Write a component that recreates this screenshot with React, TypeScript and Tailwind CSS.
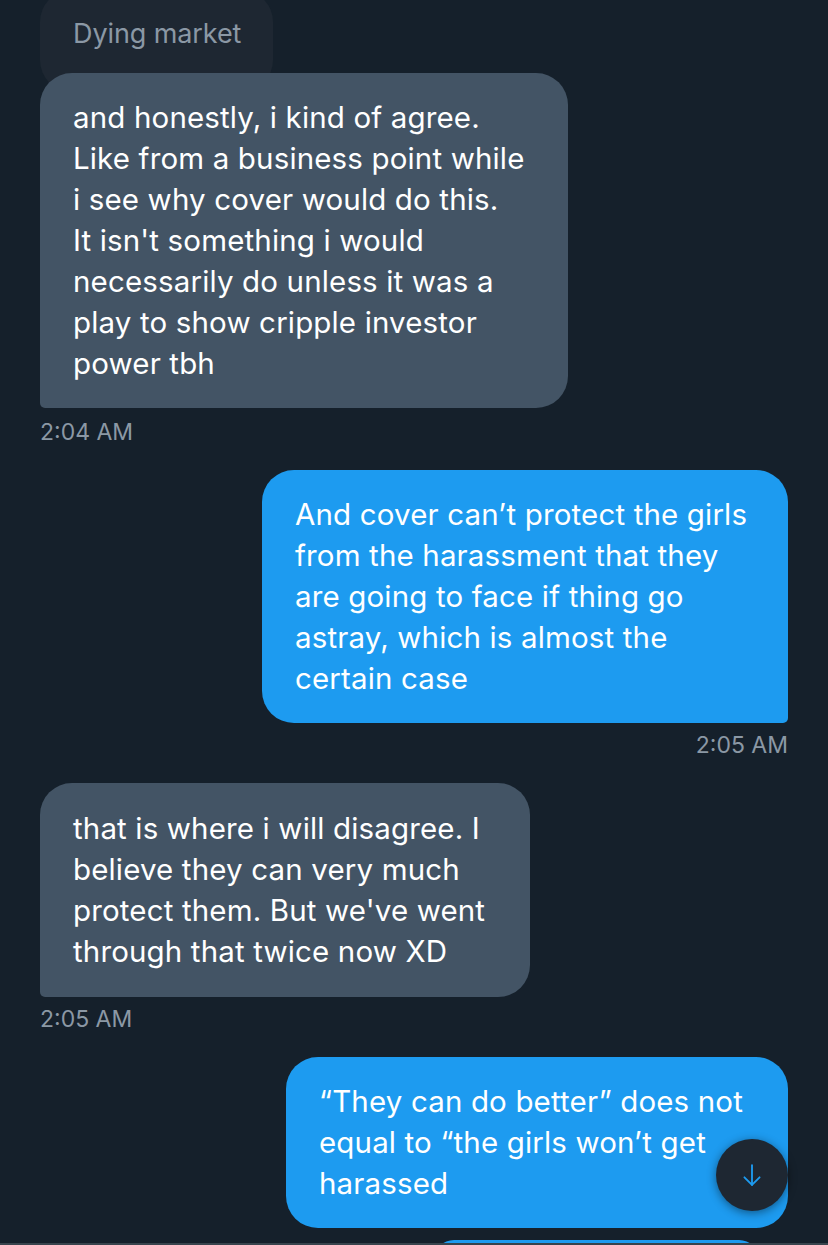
import React from "react";

const font = { fontFamily: "Inter, 'Noto Sans', sans-serif" };

function Lines({ lines }: { lines: string[] }) {
  return (
    <>
      {lines.map((l, i) => (
        <div key={i} className="whitespace-nowrap">
          {l}
        </div>
      ))}
    </>
  );
}

export default function App() {
  return (
    <div
      className="relative h-[1245px] w-[828px] overflow-hidden bg-[#15202b] text-white"
      style={font}
    >
      <div className="flex flex-col px-[40px]">
        {/* quoted reply */}
        <div className="mt-[-10px] h-[102px] w-[233px] rounded-[32px] bg-[#1e2732] pl-[33px] pt-[24px] text-[27px] leading-[40px] tracking-[-0.1px] text-[#8b98a5]">
          Dying market
        </div>

        {/* bubble 1 */}
        <div className="relative z-10 mt-[-19px] w-[528px] rounded-[32px] rounded-bl-[5px] bg-[#435465] px-[33px] py-[24px] text-[29.5px] leading-[41px] tracking-[0.15px]">
          <Lines
            lines={[
              "and honestly, i kind of agree.",
              "Like from a business point while",
              "i see why cover would do this.",
              "It isn't something i would",
              "necessarily do unless it was a",
              "play to show cripple investor",
              "power tbh",
            ]}
          />
        </div>
        <div className="mt-[12px] text-[23px] leading-[24px] text-[#8b98a5]">2:04 AM</div>

        {/* bubble 2 */}
        <div className="mt-[26px] w-[526px] self-end rounded-[32px] rounded-br-[5px] bg-[#1d9bf0] px-[33px] py-[24px] text-[29.5px] leading-[41px] tracking-[0.15px]">
          <Lines
            lines={[
              "And cover can’t protect the girls",
              "from the harassment that they",
              "are going to face if thing go",
              "astray, which is almost the",
              "certain case",
            ]}
          />
        </div>
        <div className="mt-[10px] self-end text-[23px] leading-[24px] text-[#8b98a5]">2:05 AM</div>

        {/* bubble 3 */}
        <div className="mt-[26px] w-[490px] rounded-[32px] rounded-bl-[5px] bg-[#435465] px-[33px] py-[25px] text-[29.5px] leading-[41px] tracking-[0.15px]">
          <Lines
            lines={[
              "that is where i will disagree. I",
              "believe they can very much",
              "protect them. But we've went",
              "through that twice now XD",
            ]}
          />
        </div>
        <div className="mt-[10px] text-[23px] leading-[24px] text-[#8b98a5]">2:05 AM</div>

        {/* bubble 4 */}
        <div className="mt-[26px] w-[502px] self-end rounded-[32px] bg-[#1d9bf0] px-[33px] py-[24px] text-[29.5px] leading-[41px] tracking-[0.15px]">
          <Lines
            lines={[
              "“They can do better” does not",
              "equal to “the girls won’t get",
              "harassed",
            ]}
          />
        </div>

        {/* next bubble peeking */}
        <div className="mr-[29px] mt-[12px] h-[40px] w-[325px] self-end rounded-[32px] bg-[#1d9bf0]" />
      </div>

      {/* bottom divider */}
      <div className="absolute bottom-0 left-0 h-[2px] w-full bg-[#38444d]" />

      {/* scroll-to-bottom button */}
      <div className="absolute left-[716px] top-[1139px] flex h-[72px] w-[72px] items-center justify-center rounded-full bg-[#1e2732] shadow-[0_2px_10px_rgba(0,0,0,0.45)]">
        <svg width="28" height="28" viewBox="0 0 24 24" fill="none" stroke="#1d9bf0" strokeWidth="1.6" strokeLinecap="round" strokeLinejoin="round">
          <path d="M12 3.5v17" />
          <path d="M5.5 14l6.5 6.5 6.5-6.5" />
        </svg>
      </div>
    </div>
  );
}
